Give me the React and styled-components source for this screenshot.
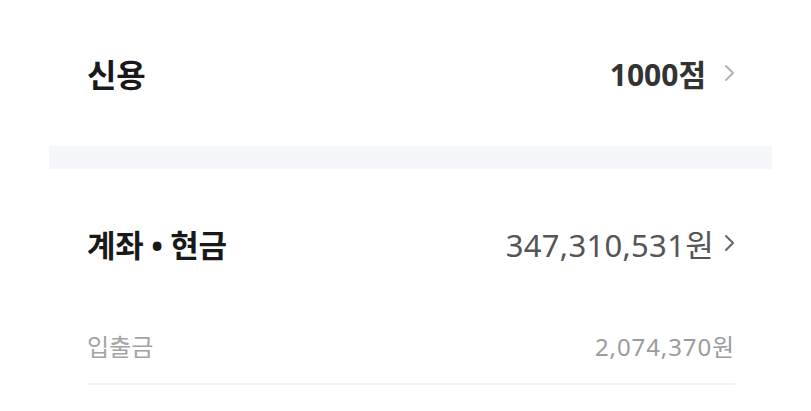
import styled, { createGlobalStyle } from 'styled-components';

const GlobalStyle = createGlobalStyle`
  html, body {
    margin: 0;
    padding: 0;
    background: #ffffff;
  }
  body {
    font-family: "Noto Sans", "Noto Sans CJK KR", sans-serif;
  }
`;

const Page = styled.div`
  width: 811px;
  height: 411px;
  padding: 0 39px 0 49px;
  box-sizing: border-box;
  overflow: hidden;
`;

const Section = styled.div`
  padding: ${(p) => p.$top}px 37px 0 38px;
`;

const Row = styled.div`
  display: flex;
  align-items: center;
  justify-content: space-between;
  height: ${(p) => p.$height}px;
  margin-top: ${(p) => p.$offset || 0}px;
`;

const Title = styled.span`
  font-size: ${(p) => p.$size}px;
  font-weight: 700;
  color: #191919;
  letter-spacing: -0.3px;
`;

const Label = styled.span`
  font-size: 24px;
  font-weight: 400;
  color: #a3a3a3;
`;

const Value = styled.span`
  display: flex;
  align-items: center;
  gap: ${(p) => p.$gap || 0}px;
  font-size: ${(p) => p.$size}px;
  font-weight: ${(p) => (p.$bold ? 700 : 400)};
  letter-spacing: ${(p) => p.$spacing || 0}px;
  color: ${(p) => p.$color};
`;

const Band = styled.div`
  height: 23px;
  margin-top: 38px;
  background: #f5f7fa;
`;

const Divider = styled.div`
  height: 2px;
  margin-top: 13px;
  background: #f3f3f3;
`;

const Chevron = ({ color }) => (
  <svg width="11" height="20" viewBox="0 0 11 20" fill="none">
    <polyline points="2,3 9,10 2,17" stroke={color} strokeWidth="2" strokeLinecap="round" strokeLinejoin="round" />
  </svg>
);

export default function App() {
  return (
    <Page>
      <GlobalStyle />
      <Section $top={38}>
        <Row $height={70}>
          <Title $size={32}>신용</Title>
          <Value $size={30} $bold $gap={18} $color="#333333">
            1000점
            <Chevron color="#b5b5b5" />
          </Value>
        </Row>
      </Section>
      <Band />
      <Section $top={39}>
        <Row $height={70}>
          <Title $size={31}>계좌 • 현금</Title>
          <Value $size={31} $gap={10} $spacing={0.3} $color="#555555">
            347,310,531원
            <Chevron color="#666666" />
          </Value>
        </Row>
        <Row $height={50} $offset={42}>
          <Label>입출금</Label>
          <Value $size={24} $spacing={0.9} $color="#9c9c9c">2,074,370원</Value>
        </Row>
        <Divider />
      </Section>
    </Page>
  );
}
